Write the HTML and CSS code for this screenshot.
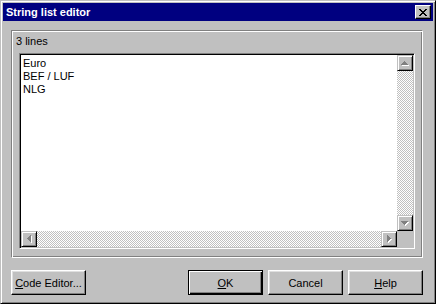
FILE: index.html
```html
<!DOCTYPE html>
<html>
<head>
<meta charset="utf-8">
<link rel="stylesheet" href="styles.css">
</head>
<body>
<div class="window">
  <div class="titlebar">
    <span class="title">String list editor</span>
    <div class="close">
      <svg width="8" height="7" viewBox="0 0 8 7"><path fill="#000" d="M0 0h2v1H0z M6 0h2v1H6z M1 1h2v1H1z M5 1h2v1H5z M2 2h4v1H2z M3 3h2v1H3z M2 4h4v1H2z M1 5h2v1H1z M5 5h2v1H5z M0 6h2v1H0z M6 6h2v1H6z"/></svg>
    </div>
  </div>
  <div class="body">
    <div class="group">
      <div class="group-label">3 lines</div>
      <div class="memo">
        <div class="memo-text">
          <div>Euro</div>
          <div>BEF / LUF</div>
          <div>NLG</div>
        </div>
        <div class="vscroll">
          <div class="sbtn">
            <svg width="8" height="5" viewBox="0 0 8 5"><path fill="#fff" transform="translate(1,1)" d="M3 0h1v1h1v1h1v1h1v1H0V3h1V2h1V1h1z"/><path fill="#808080" d="M3 0h1v1h1v1h1v1h1v1H0V3h1V2h1V1h1z"/></svg>
          </div>
          <div class="track"></div>
          <div class="sbtn">
            <svg width="8" height="5" viewBox="0 0 8 5"><path fill="#fff" transform="translate(1,1)" d="M0 0h7v1H6v1H5v1H4v1H3V3H2V2H1V1H0z"/><path fill="#808080" d="M0 0h7v1H6v1H5v1H4v1H3V3H2V2H1V1H0z"/></svg>
          </div>
        </div>
        <div class="hscroll">
          <div class="sbtn">
            <svg width="5" height="8" viewBox="0 0 5 8"><path fill="#fff" transform="translate(1,1)" d="M0 3h1V2h1V1h1V0h1v7H3V6H2V5H1V4H0z"/><path fill="#808080" d="M0 3h1V2h1V1h1V0h1v7H3V6H2V5H1V4H0z"/></svg>
          </div>
          <div class="track"></div>
          <div class="sbtn">
            <svg width="5" height="8" viewBox="0 0 5 8"><path fill="#fff" transform="translate(1,1)" d="M0 0h1v1h1v1h1v1h1v1H3v1H2v1H1v1H0z"/><path fill="#808080" d="M0 0h1v1h1v1h1v1h1v1H3v1H2v1H1v1H0z"/></svg>
          </div>
        </div>
        <div class="corner"></div>
      </div>
    </div>
    <div class="buttons">
      <div class="btn"><span><u>C</u>ode Editor...</span></div>
      <div class="btn default push"><span><u>O</u>K</span></div>
      <div class="btn"><span>Cancel</span></div>
      <div class="btn"><span><u>H</u>elp</span></div>
    </div>
  </div>
</div>
</body>
</html>
```

FILE: styles.css
```css
* { box-sizing: border-box; }

body {
  margin: 0;
  font-family: "Liberation Sans", Arial, sans-serif;
  font-size: 11px;
  color: #000;
}

.window {
  width: 436px;
  height: 304px;
  background: #c0c0c0;
  border: 1px solid;
  border-color: #c0c0c0 #000 #000 #c0c0c0;
  box-shadow: inset 1px 1px #fff, inset -1px -1px #808080;
  padding: 2px;
  display: flex;
  flex-direction: column;
}

.titlebar {
  height: 18px;
  flex-shrink: 0;
  background: #000080;
  color: #fff;
  display: flex;
  align-items: center;
  padding: 0 2px 0 3px;
}

.title {
  flex: 1;
  font-weight: bold;
}

.close {
  width: 16px;
  height: 14px;
  background: #c0c0c0;
  border: 1px solid;
  border-color: #fff #000 #000 #fff;
  box-shadow: inset -1px -1px #808080;
  padding: 3px 0 0 3px;
  display: flex;
  align-items: flex-start;
}

.close svg, .sbtn svg { display: block; }

.body {
  flex: 1;
  display: flex;
  flex-direction: column;
  gap: 12px;
  padding: 9px 10px 6px 8px;
}

.group {
  flex: 1;
  display: flex;
  flex-direction: column;
  border: 1px solid;
  border-color: #808080 #fff #fff #808080;
  box-shadow: inset 1px 1px #fff, inset -1px -1px #808080;
  padding: 4px 7px 8px 7px;
}

.group-label {
  height: 13px;
  line-height: 13px;
  margin: 0 0 5px -3px;
}

.memo {
  flex: 1;
  display: grid;
  grid-template-columns: 1fr 16px;
  grid-template-rows: 1fr 16px;
  background: #fff;
  border: 1px solid;
  border-color: #808080 #fff #fff #808080;
  padding: 1px;
  box-shadow: inset 1px 1px #000, inset -1px -1px #c0c0c0;
}

.memo-text {
  padding: 2px 2px;
  line-height: 13px;
  background: #fff;
}

.vscroll {
  display: flex;
  flex-direction: column;
}

.hscroll {
  display: flex;
}

.track {
  flex: 1;
  background: repeating-conic-gradient(#fff 0 25%, #c0c0c0 0 50%) 0 0 / 2px 2px;
}

.sbtn {
  width: 16px;
  height: 16px;
  flex-shrink: 0;
  background: #c0c0c0;
  border: 1px solid;
  border-color: #c0c0c0 #000 #000 #c0c0c0;
  box-shadow: inset 1px 1px #fff, inset -1px -1px #808080;
  display: flex;
  align-items: center;
  justify-content: center;
}

.corner {
  background: #c0c0c0;
}

.buttons {
  height: 25px;
  flex-shrink: 0;
  display: flex;
  gap: 5px;
}

.btn {
  width: 75px;
  height: 25px;
  border: 1px solid;
  border-color: #fff #000 #000 #fff;
  box-shadow: inset -1px -1px #808080, inset 1px 1px #dfdfdf;
  display: flex;
  align-items: center;
  justify-content: center;
}

.push { margin-left: auto; }

.btn.default {
  border-color: #000;
  box-shadow: inset 1px 1px #fff, inset -1px -1px #000, inset -2px -2px #808080;
}
```
